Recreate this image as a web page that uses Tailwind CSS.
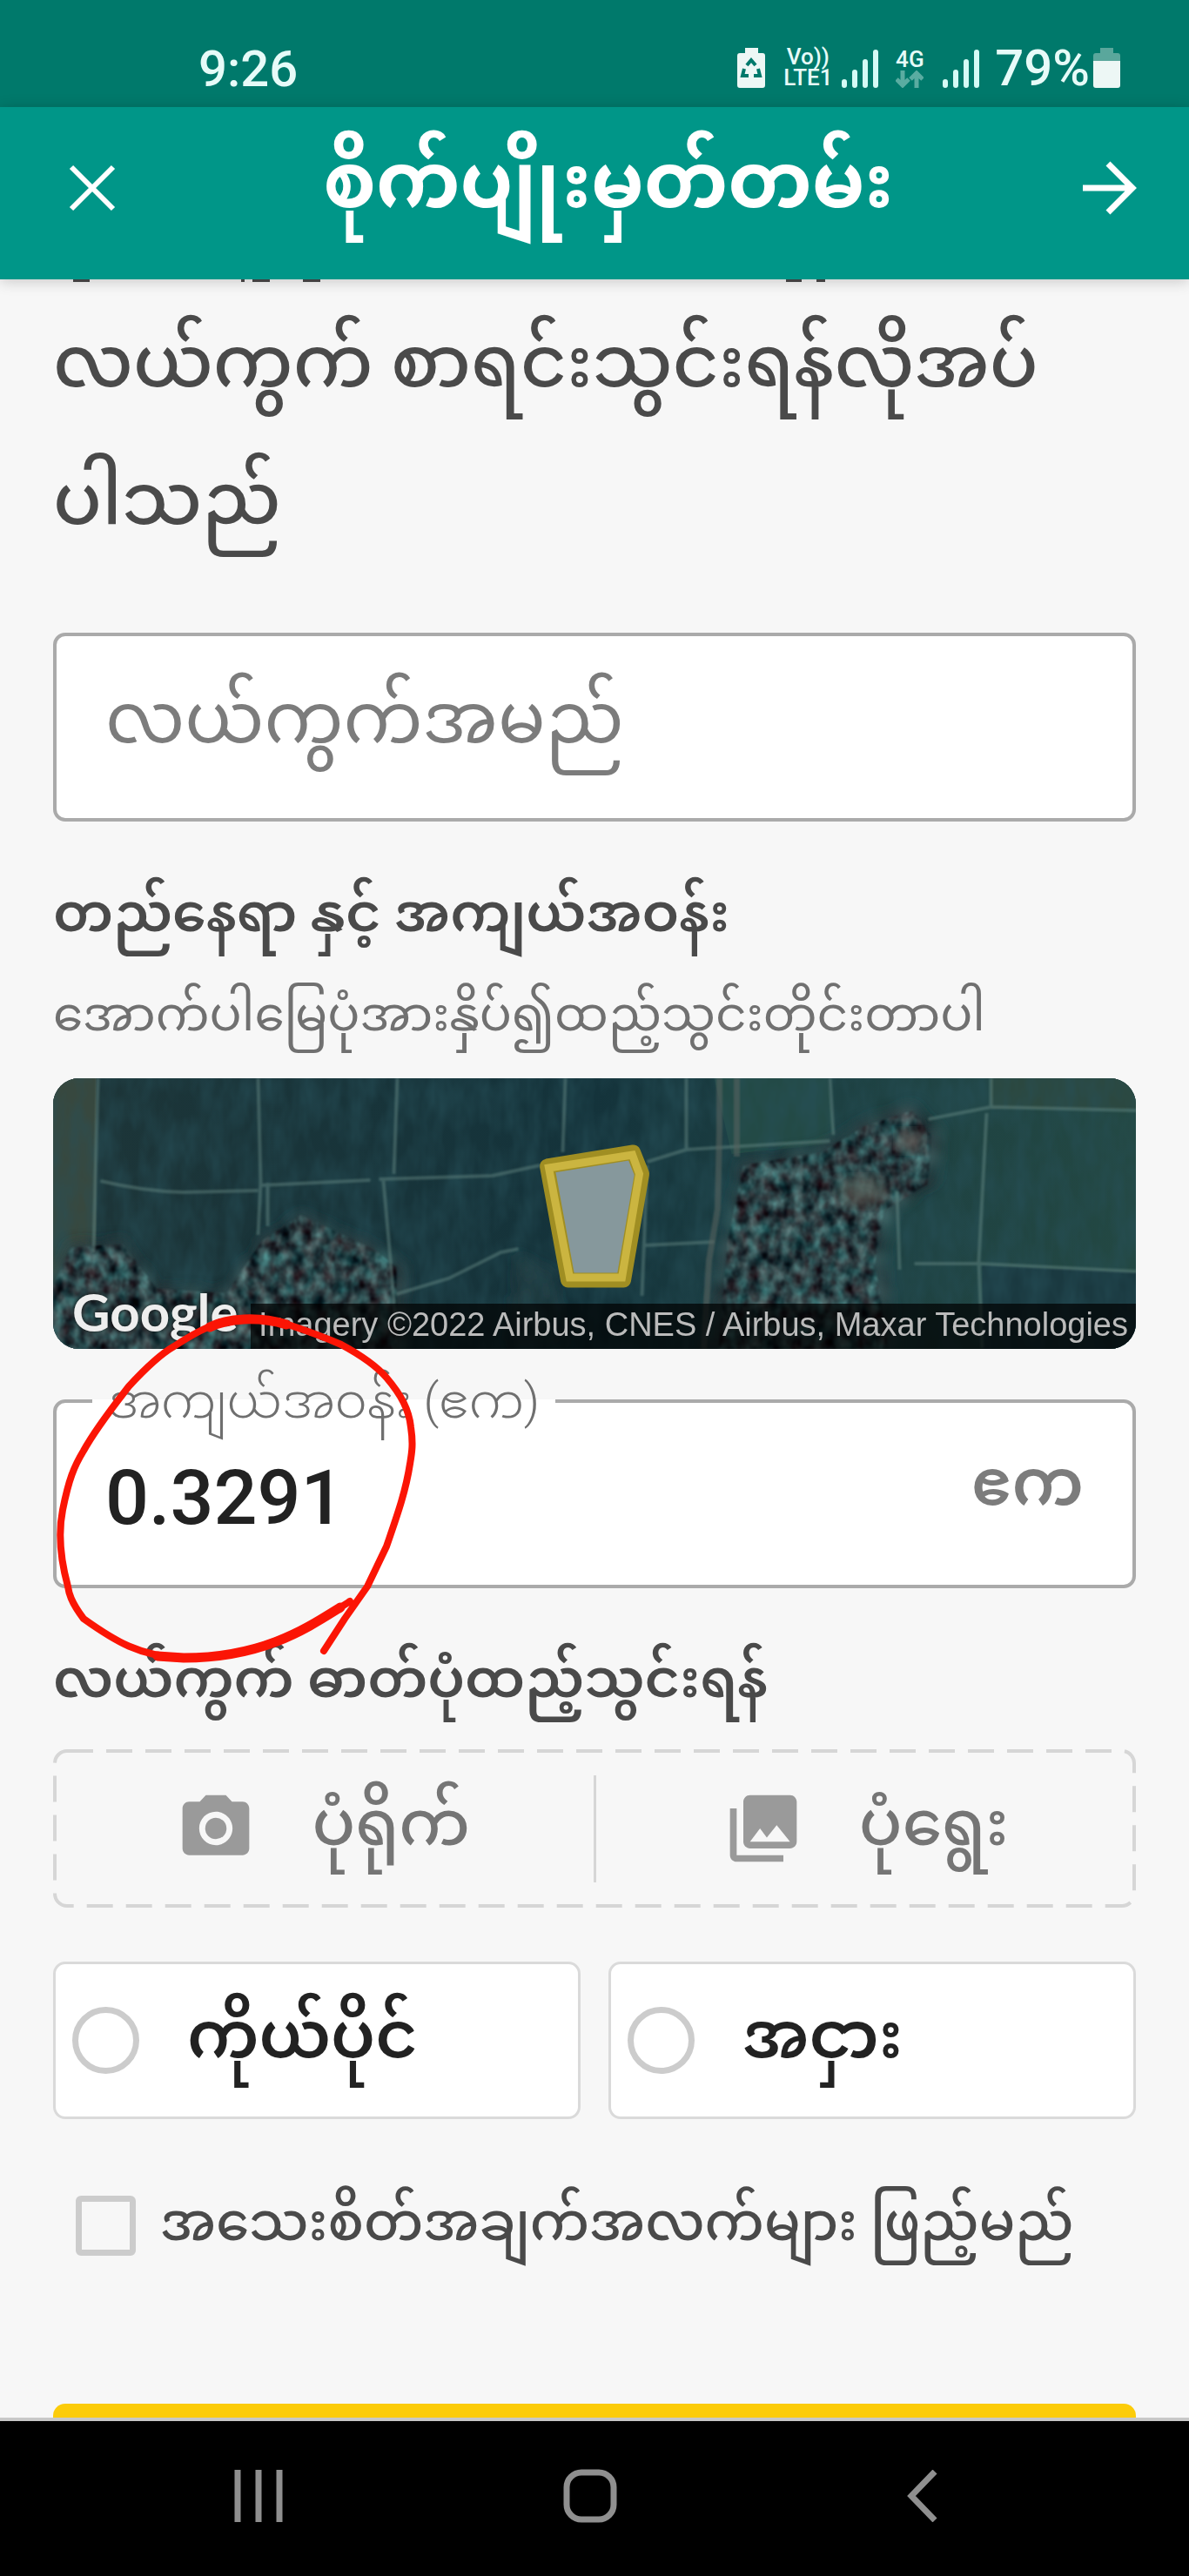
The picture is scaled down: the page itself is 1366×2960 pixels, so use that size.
<!DOCTYPE html>
<html lang="my">
<head>
  <meta charset="UTF-8" />
  <meta name="viewport" content="width=device-width, initial-scale=1" />
  <title>စိုက်ပျိုးမှတ်တမ်း</title>
  <script src="https://cdn.jsdelivr.net/npm/@tailwindcss/browser@4"></script>
</head>
<body class="bg-[#f7f7f7] text-[#4a4a4a] min-h-screen flex flex-col font-['Roboto','Noto_Sans_Myanmar',sans-serif]">

  <!-- Status bar -->
  <div class="h-[123px] bg-[#00796b] text-[#e6fbf8] flex items-end justify-between pl-[228px] pr-[79px] pb-[22px]">
    <span class="text-[58px] leading-[44px] font-medium">9:26</span>
    <div class="flex items-end">
      <svg class="w-8 h-[46px]" viewBox="0 0 32 46" fill="none">
        <path d="M9 0h15v6h5a3 3 0 0 1 3 3v34a3 3 0 0 1-3 3H3a3 3 0 0 1-3-3V9a3 3 0 0 1 3-3h6z" fill="#edf7f5" />
        <path d="M11 20l5-6 5 6M8 24l-2 8h7M24 24l2 8h-7" stroke="#00796b" stroke-width="4" />
      </svg>
      <div class="ml-[20px] w-[58px] flex flex-col items-center text-[26px] leading-[24px] font-medium">
        <span>Vo))</span>
        <span>LTE1</span>
      </div>
      <svg class="ml-[10px] w-[42px] h-11" viewBox="0 0 42 44" stroke="#d5fbf6" stroke-width="6" stroke-linecap="round">
        <path d="M3 37v4M15 26v15M27 14v27M39 3v38" />
      </svg>
      <div class="ml-[18px] w-9 flex flex-col items-center">
        <span class="text-[26px] leading-[26px] font-medium">4G</span>
        <svg class="w-8 h-5" viewBox="0 0 32 20" fill="none" stroke="#5aaca1" stroke-width="5">
          <path d="M8 0v16M1 10l7 7 7-7M24 20V4M17 10l7-7 7 7" />
        </svg>
      </div>
      <svg class="ml-[20px] w-[42px] h-11" viewBox="0 0 42 44" stroke="#d5fbf6" stroke-width="6" stroke-linecap="round">
        <path d="M3 37v4M15 26v15M27 14v27M39 3v38" />
      </svg>
      <span class="ml-[18px] text-[58px] leading-[46px] font-medium">79%</span>
      <svg class="ml-1 w-[31px] h-[46px]" viewBox="0 0 31 46">
        <path d="M8 0h15v6h5a3 3 0 0 1 3 3v6H0V9a3 3 0 0 1 3-3h5z" fill="#5aa79c" />
        <path d="M0 15h31v28a3 3 0 0 1-3 3H3a3 3 0 0 1-3-3z" fill="#edf7f5" />
      </svg>
    </div>
  </div>

  <!-- App bar -->
  <header class="relative z-10 h-[198px] bg-[#009688] text-white flex items-center pl-[76px] pr-[60px] pb-3 shadow-[0_2px_16px_rgba(0,0,0,0.2)]">
    <button aria-label="Close">
      <svg class="w-[60px] h-[60px]" viewBox="0 0 60 60" fill="none" stroke="currentColor" stroke-width="6">
        <path d="M6 6l48 48M54 6L6 54" />
      </svg>
    </button>
    <h1 class="flex-1 ml-5 pb-4 text-center text-[87px] leading-[120px] font-bold">စိုက်ပျိုးမှတ်တမ်း</h1>
    <button aria-label="Next">
      <svg class="w-16 h-16" viewBox="0 0 64 64" fill="none" stroke="currentColor" stroke-width="7">
        <path d="M2 32h56M31 4l28 28-28 28" />
      </svg>
    </button>
  </header>

  <!-- Form -->
  <main class="relative flex-1 overflow-hidden px-[61px] pt-4">
    <!-- Bottoms of the line that has scrolled under the app bar -->
    <svg class="absolute left-0 top-0 h-[3px] w-full" fill="#4a4a4a" aria-hidden="true">
      <path d="M84 0h19v3h-19zM277 0h4v3h-4zM290 0h20v3h-20zM348 0h20v3h-20zM903 0h18v3h-18zM938 0h10v3h-10z" />
    </svg>

    <p class="text-[82px] leading-[158px] font-medium">လယ်ကွက် စာရင်းသွင်းရန်လိုအပ်<br />ပါသည်</p>

    <input type="text" aria-label="လယ်ကွက်အမည်" placeholder="လယ်ကွက်အမည်"
      class="block mt-[74px] w-full h-[217px] px-[56px] pb-5 rounded-[14px] border-4 border-[#aaa] bg-white text-[81px] leading-[160px] placeholder:text-[#7c7c7c]" />

    <h2 class="mt-[57px] text-[62px] leading-[96px] font-semibold">တည်နေရာ နှင့် အကျယ်အဝန်း</h2>
    <p class="mt-5 text-[55px] leading-[96px] text-[#707070]">အောက်ပါမြေပုံအားနှိပ်၍ထည့်သွင်းတိုင်းတာပါ</p>

    <!-- Map preview -->
    <div class="relative mt-[26px] h-[311px] rounded-[30px] overflow-hidden bg-[#17343b]">
      <svg class="w-full h-full" viewBox="0 0 1245 311" preserveAspectRatio="xMidYMid slice">
        <defs>
          <linearGradient id="ground">
            <stop offset="0" stop-color="#1d3538" />
            <stop offset="0.5" stop-color="#14333b" />
            <stop offset="0.68" stop-color="#1c3f42" />
            <stop offset="1" stop-color="#234843" />
          </linearGradient>
          <filter id="trees" x="0" y="0" width="1" height="1" color-interpolation-filters="sRGB">
            <feTurbulence type="fractalNoise" baseFrequency="0.08 0.06" numOctaves="4" seed="7" />
            <feColorMatrix values="0.25 0.5 0 0 -0.2  0 0.8 0 0 -0.14  0 0.75 0 0 -0.1  0 0 0 0 1" />
            <feComposite in2="SourceGraphic" operator="in" />
            <feGaussianBlur stdDeviation="0.8" />
          </filter>
          <filter id="grain" x="0" y="0" width="1" height="1">
            <feTurbulence type="fractalNoise" baseFrequency="0.05 0.02" numOctaves="3" seed="3" />
            <feColorMatrix values="0 0 0 0 0.02  0 0 0 0 0.08  0 0 0 0 0.1  0 1 0 0 -0.3" />
          </filter>
          <filter id="soft"><feGaussianBlur stdDeviation="7" /></filter>
          <filter id="line"><feGaussianBlur stdDeviation="1" /></filter>
        </defs>
        <rect width="1245" height="311" fill="url(#ground)" />
        <path d="M0 0h50v240H0z" fill="#37483f" />
        <path d="M760 0h130l10 75-120 12z" fill="#234a46" />
        <path d="M1078 0h167v35h-167z" fill="#2b4840" />
        <path d="M1068 215l177 8v88h-177z" fill="#1a3940" />
        <rect width="1245" height="311" filter="url(#grain)" />
        <g filter="url(#soft)">
          <path d="M0 235l20-45 60-5 40 55 80 5 40-60 45-30 90 40 30 20v100H0z" fill="#fff" filter="url(#trees)" />
          <path d="M530 200l45 20 20 91h-75z" fill="#fff" opacity="0.4" filter="url(#trees)" />
          <path d="M770 190l20-95 90-15 50-30 60-20 30 30-5 60-50 30-10 60 15 101H745z" fill="#fff" filter="url(#trees)" />
        </g>
        <path d="M0 240l20-45 60-5 40 52 80 5 40-60 45-30 85 40 25 20v100H0zM775 190l18-90 90-15 50-30 55-18 22 30-5 55-50 30-10 60 15 101H765z" fill="#fff" opacity="0.9" filter="url(#trees)" />
        <ellipse cx="930" cy="130" rx="28" ry="18" fill="#5d605a" opacity="0.7" filter="url(#soft)" />
        <ellipse cx="985" cy="72" rx="16" ry="14" fill="#66605c" opacity="0.7" filter="url(#soft)" />
        <g fill="none" stroke="#6b8d87" stroke-width="4" opacity="0.45" filter="url(#line)">
          <path d="M52 0l-5 200M236 0l3 120-3 60M247 120v50M396 0l-4 110M380 118l8 90 6 70M589 0l-3 85" />
          <path d="M55 118q50 12 95 13l86-2M240 123l125-6M375 116l130-4M505 112l55-12" />
          <path d="M395 248l60-18 60-30 20-4" />
          <path d="M728 0v82l-45 14M728 82l165-10M893 0l4 65M1078 0v33l-72 14M1078 33l167 4M1073 40l-9 170 4 100M970 130l3 90M990 213h75l180 9M683 100l-6 150M680 192l80-4" />
        </g>
        <path d="M766 0v60l-2 90-10 60-6 101M786 0v90" fill="none" stroke="#59645f" stroke-width="7" opacity="0.6" filter="url(#line)" />
        <path d="M568 101l99-16 10 25-21 122h-64z" fill="#86989c" stroke="#a08e22" stroke-width="17" stroke-linejoin="round" />
        <path d="M570 103l96-15 8 22-20 119h-60z" fill="none" stroke="#cbb540" stroke-width="9" />
      </svg>
      <span class="absolute left-[22px] bottom-[8px] text-[60px] leading-[70px] font-bold text-[#eee] font-['Lato',sans-serif] [text-shadow:0_0_5px_#111]">Google</span>
      <div class="absolute right-0 bottom-0 h-[52px] pl-[9px] pr-[9px] bg-black/70 text-[#bbb] text-[38px] leading-[48px] font-['Liberation_Sans',Arial,sans-serif] whitespace-nowrap">Imagery ©2022 Airbus, CNES / Airbus, Maxar Technologies</div>
    </div>

    <!-- Area -->
    <div class="relative mt-[30px]">
      <fieldset class="h-[245px] rounded-[14px] border-4 border-[#aaa] bg-white">
        <legend class="ml-[41px] px-[18px] text-[56px] leading-[60px] font-light text-[#6f6f6f]"><label for="area">အကျယ်အဝန်း (ဧက)</label></legend>
        <div class="flex items-start justify-between px-[56px]">
          <input id="area" type="text" inputmode="decimal" value="0.3291" class="mt-[31px] w-[600px] min-w-0 text-[88px] leading-[100px] h-[100px] font-medium text-[#222]" />
          <span class="mt-[14px] text-[74px] leading-[100px] font-semibold text-[#7c7c7c]">ဧက</span>
        </div>
      </fieldset>
      <!-- Pen mark round the area -->
      <svg class="absolute left-0 -top-20 w-[420px] h-[420px] pointer-events-none" viewBox="0 0 420 420" fill="none" stroke="#fb1505" stroke-linecap="round" stroke-linejoin="round" aria-hidden="true">
        <path stroke-width="8" d="M341 340C300 366 240 405 150 405C100 404 70 385 35 360C20 340 18 330 17 323C8 290 6 260 11 235C18 200 24 185 35 167C50 140 70 115 87 93C110 68 125 55 139 47C165 30 190 16 218 16C240 15 255 18 270 22C300 32 315 38 331 45C355 58 372 70 383 83C400 103 409 120 411 140C414 160 412 170 410 182C405 215 394 245 383 277L361 323L335 360L311 397" />
        <path stroke-width="11" d="M330 347C290 372 240 405 150 405L120 403M180 25C200 15 235 12 268 22" />
      </svg>
    </div>

    <h2 class="mt-[56px] text-[62px] leading-[96px] font-semibold">လယ်ကွက် ဓာတ်ပုံထည့်သွင်းရန်</h2>

    <!-- Photo -->
    <div class="relative mt-[33px] h-[182px] flex items-center text-[73px] leading-[100px] font-medium text-[#757575]">
      <svg class="absolute inset-0 w-full h-full" fill="none" stroke="#d6d6d6" stroke-width="4" stroke-dasharray="30 15" aria-hidden="true">
        <rect class="w-[calc(100%-4px)] h-[calc(100%-4px)]" x="2" y="2" rx="14" />
      </svg>
      <button class="relative flex-1 flex items-center justify-center gap-16">
        <svg class="w-[92px] h-[92px]" viewBox="0 0 24 24" fill="#9a9a9a">
          <circle cx="12" cy="12" r="3.2" />
          <path d="M9 2L7.17 4H4c-1.1 0-2 .9-2 2v12c0 1.1.9 2 2 2h16c1.1 0 2-.9 2-2V6c0-1.1-.9-2-2-2h-3.170L15 2H9zm3 15c-2.760 0-5-2.240-5-5s2.240-5 5-5 5 2.240 5 5-2.240 5-5 5z" />
        </svg>
        <span class="pb-3">ပုံရိုက်</span>
      </button>
      <div class="w-[3px] h-[123px] bg-[#d6d6d6]"></div>
      <button class="relative flex-1 flex items-center justify-center gap-16">
        <svg class="w-[92px] h-[92px]" viewBox="0 0 24 24" fill="#9a9a9a">
          <path d="M22 16V4c0-1.1-.9-2-2-2H8c-1.1 0-2 .9-2 2v12c0 1.1.9 2 2 2h12c1.1 0 2-.9 2-2zm-11-4l2.030 2.710L16 11l4 5H8l3-4zM2 6v14c0 1.1.9 2 2 2h14v-2H4V6H2z" />
        </svg>
        <span class="pb-3">ပုံရွေး</span>
      </button>
    </div>

    <!-- Ownership -->
    <div class="mt-[62px] flex gap-8 text-[74px] leading-[100px] font-semibold text-[#222]">
      <label class="flex-1 h-[181px] flex items-center gap-[55px] pl-[19px] rounded-[14px] border-3 border-[#dadada] bg-white">
        <input type="radio" name="ownership" class="appearance-none w-[77px] h-[77px] rounded-full border-[7px] border-[#ccc]" />
        <span class="pb-3">ကိုယ်ပိုင်</span>
      </label>
      <label class="flex-1 h-[181px] flex items-center gap-[55px] pl-[19px] rounded-[14px] border-3 border-[#dadada] bg-white">
        <input type="radio" name="ownership" class="appearance-none w-[77px] h-[77px] rounded-full border-[7px] border-[#ccc]" />
        <span class="pb-3">အငှား</span>
      </label>
    </div>

    <label class="mt-[70px] pl-[26px] flex items-center gap-7 text-[61px] leading-[96px] font-medium whitespace-nowrap">
      <input type="checkbox" class="appearance-none shrink-0 mt-2 w-[69px] h-[69px] rounded-[6px] border-[7px] border-[#ccc]" />
      အသေးစိတ်အချက်အလက်များ ဖြည့်မည်
    </label>

    <div class="mt-[161px] h-4 rounded-t-[14px] bg-[#fccc0a]"></div>
  </main>

  <!-- Navigation bar -->
  <nav class="h-[182px] border-t-4 border-[#c8c8c8] bg-black grid grid-cols-3 place-items-center pl-[106px] pr-[116px] pb-[6px]">
    <button aria-label="Recents">
      <svg class="w-14 h-[60px]" viewBox="0 0 56 60" stroke="#8f8f8f" stroke-width="7">
        <path d="M4 0v60M28 0v60M52 0v60" />
      </svg>
    </button>
    <button aria-label="Home">
      <svg class="w-[62px] h-[62px]" viewBox="0 0 62 62" fill="none" stroke="#8f8f8f" stroke-width="7">
        <rect x="4" y="4" width="54" height="54" rx="17" />
      </svg>
    </button>
    <button aria-label="Back">
      <svg class="w-9 h-[60px]" viewBox="0 0 36 60" fill="none" stroke="#8f8f8f" stroke-width="7">
        <path d="M33 2L6 30l27 28" />
      </svg>
    </button>
  </nav>

</body>
</html>
